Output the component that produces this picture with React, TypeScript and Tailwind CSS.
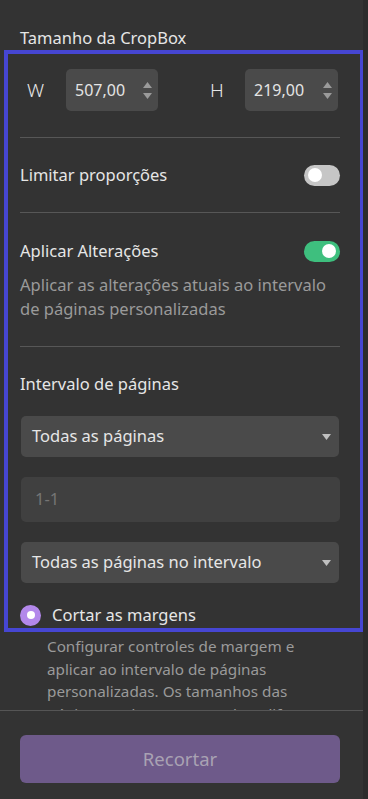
import React, { useState } from 'react';

const font = { fontFamily: '"Noto Sans", "Open Sans", sans-serif' };

function Spinner() {
  return (
    <div className="flex flex-col items-center gap-[5px] pr-[1px]">
      <svg width="9" height="6" viewBox="0 0 9 6">
        <path d="M4.5 0 L9 6 L0 6 Z" fill="#9a9a9a" />
      </svg>
      <svg width="9" height="6" viewBox="0 0 9 6">
        <path d="M0 0 L9 0 L4.5 6 Z" fill="#9a9a9a" />
      </svg>
    </div>
  );
}

function NumberBox({ value, width }: { value: string; width: string }) {
  return (
    <div className={`${width} h-[42px] rounded-[5px] bg-[#4a4a4a] flex items-center justify-between pl-[9px] pr-[5px]`}>
      <span className="text-[16px] text-[#e4e4e4]">{value}</span>
      <Spinner />
    </div>
  );
}

function Toggle({ on }: { on: boolean }) {
  return (
    <div
      className={`w-[36px] h-[21px] rounded-full flex items-center px-[4px] ${
        on ? 'bg-[#3ebf7e] justify-end' : 'bg-[#c6c6c6] justify-start'
      }`}
    >
      <div className="w-[14px] h-[14px] rounded-full bg-white" />
    </div>
  );
}

function Select({ label }: { label: string }) {
  return (
    <div className="ml-px w-[318px] h-[41px] rounded-[5px] bg-[#4a4a4a] flex items-center justify-between pl-[11px] pr-[8px]">
      <span className="text-[16.5px] text-[#e6e6e6]">{label}</span>
      <svg width="9" height="6" viewBox="0 0 9 6">
        <path d="M0 0 L9 0 L4.5 6 Z" fill="#c0c0c0" />
      </svg>
    </div>
  );
}

export default function App() {
  const [limit] = useState(false);
  const [apply] = useState(true);

  return (
    <div className="w-[368px] h-[799px] bg-[#333333] flex overflow-hidden" style={font}>
      <div className="w-[363px] h-full flex flex-col">
        {/* scrollable settings */}
        <div className="flex-1 overflow-hidden pl-5 pr-[23px] pt-[26px]">
          <div className="text-[16.5px] leading-6 text-[#e6e6e6]">Tamanho da CropBox</div>

          <div className="mt-1 -ml-3 -mr-5 pl-3 pr-5 outline-4 outline-[#4646d2]">
            {/* W / H */}
            <div className="pt-[15px] flex items-center">
              <span className="w-[46px] pl-[7px] text-[19px] font-light text-[#e6e6e6]">W</span>
              <NumberBox value="507,00" width="w-[92px]" />
              <span className="ml-[52px] w-[35px] text-[19px] font-light text-[#e6e6e6]">H</span>
              <NumberBox value="219,00" width="w-[93px]" />
            </div>

            <div className="mt-[26px] h-px bg-[#575757]" />

            <div className="h-[74px] flex items-center justify-between">
              <span className="text-[16.5px] text-[#e6e6e6]">Limitar proporções</span>
              <Toggle on={limit} />
            </div>

            <div className="h-px bg-[#575757]" />

            <div className="pt-[26px] pb-[25px]">
              <div className="flex items-center justify-between">
                <span className="text-[16.5px] leading-6 text-[#e6e6e6]">Aplicar Alterações</span>
                <Toggle on={apply} />
              </div>
              <p className="mt-[10px] text-[16.5px] leading-6 text-[#9a9a9a]">
                Aplicar as alterações atuais ao intervalo de páginas personalizadas
              </p>
            </div>

            <div className="h-px bg-[#575757]" />

            <div className="pt-[25px] text-[16.5px] leading-6 text-[#e6e6e6]">Intervalo de páginas</div>

            <div className="mt-5">
              <Select label="Todas as páginas" />
            </div>

            <div className="mt-5 ml-px w-[319px] h-[45px] rounded-[5px] bg-[#404040] flex items-center pl-[14px]">
              <span className="text-[16.5px] text-[#757575]">1-1</span>
            </div>

            <div className="mt-5">
              <Select label="Todas as páginas no intervalo" />
            </div>

            <div className="mt-[21px] pb-[2px] h-6 flex items-center">
              <div className="w-[21px] h-[21px] rounded-full bg-[#b388eb] flex items-center justify-center">
                <div className="w-[8px] h-[8px] rounded-full bg-white" />
              </div>
              <span className="ml-[11px] text-[16.5px] text-[#e6e6e6]">Cortar as margens</span>
            </div>
          </div>

          <p className="mt-[7px] pl-[27px] text-[15.25px] leading-[22.5px] text-[#9a9a9a]">
            Configurar controles de margem e aplicar ao intervalo de páginas personalizadas. Os tamanhos das
            páginas podem ter tamanhos diferentes.
          </p>
        </div>

        {/* footer */}
        <div className="border-t border-[#555555] px-5 pt-6 pb-4">
          <button className="w-[320px] h-[48px] rounded-[6px] bg-[#6e5a8a] text-[18.5px] text-[#a9a2b3]">
            Recortar
          </button>
        </div>
      </div>
      <div className="w-[5px] h-full bg-[#2c2c2c]" />
    </div>
  );
}
